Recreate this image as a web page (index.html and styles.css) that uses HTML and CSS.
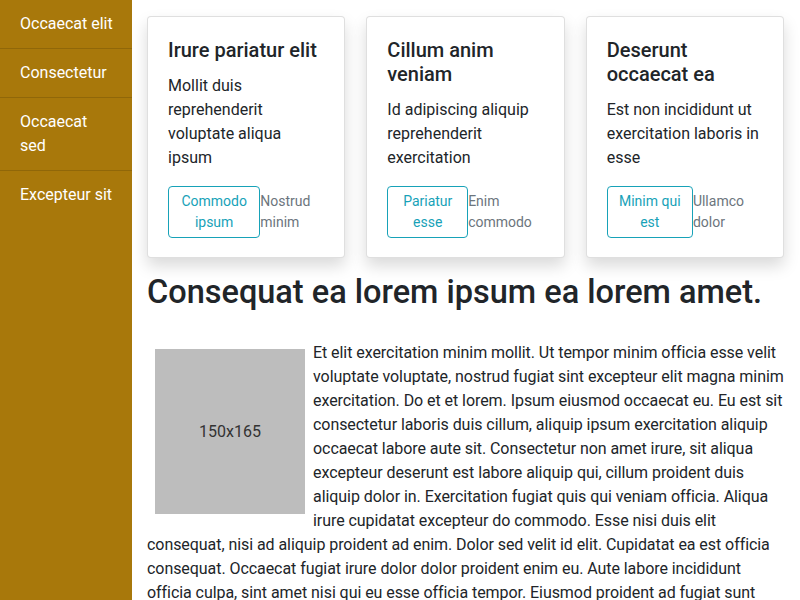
FILE: index.html
```html
<!DOCTYPE html>
<html lang="la">
<head>
<meta charset="utf-8">
<title>Consequat</title>
<link rel="stylesheet" href="styles.css">
</head>
<body>
<div class="layout">
  <nav class="sidebar">
    <a class="nav-item" href="#">Occaecat elit</a>
    <a class="nav-item" href="#">Consectetur</a>
    <a class="nav-item" href="#">Occaecat<br>sed</a>
    <a class="nav-item" href="#">Excepteur sit</a>
  </nav>
  <main class="main">
    <div class="cards">
      <div class="card">
        <h5 class="card-title">Irure pariatur elit</h5>
        <p class="card-text">Mollit duis reprehenderit voluptate aliqua ipsum</p>
        <div class="card-actions">
          <a class="btn" href="#">Commodo ipsum</a>
          <small class="muted">Nostrud minim</small>
        </div>
      </div>
      <div class="card">
        <h5 class="card-title">Cillum anim veniam</h5>
        <p class="card-text">Id adipiscing aliquip reprehenderit exercitation</p>
        <div class="card-actions">
          <a class="btn" href="#">Pariatur esse</a>
          <small class="muted">Enim commodo</small>
        </div>
      </div>
      <div class="card">
        <h5 class="card-title">Deserunt occaecat ea</h5>
        <p class="card-text">Est non incididunt ut exercitation laboris in esse</p>
        <div class="card-actions">
          <a class="btn" href="#">Minim qui est</a>
          <small class="muted">Ullamco dolor</small>
        </div>
      </div>
    </div>
    <h2 class="title">Consequat ea lorem ipsum ea lorem amet.</h2>
    <p class="article"><span class="placeholder">150x165</span>Et elit exercitation minim mollit. Ut tempor minim officia esse velit voluptate voluptate, nostrud fugiat sint excepteur elit magna minim exercitation. Do et et lorem. Ipsum eiusmod occaecat eu. Eu est sit consectetur laboris duis cillum, aliquip ipsum exercitation aliquip occaecat labore aute sit. Consectetur non amet irure, sit aliqua excepteur deserunt est labore aliquip qui, cillum proident duis aliquip dolor in. Exercitation fugiat quis qui veniam officia. Aliqua irure cupidatat excepteur do commodo. Esse nisi duis elit consequat, nisi ad aliquip proident ad enim. Dolor sed velit id elit. Cupidatat ea est officia consequat. Occaecat fugiat irure dolor dolor proident enim eu. Aute labore incididunt officia culpa, sint amet nisi qui eu esse officia tempor. Eiusmod proident ad fugiat sunt cillum nostrud, dolore magna eu velit laboris. Labore sint amet in ipsum est commodo.</p>
  </main>
</div>
</body>
</html>
```
FILE: styles.css
```css
html, body {
  margin: 0;
  height: 100%;
}
body {
  font-family: Roboto, "Liberation Sans", sans-serif;
  font-size: 16px;
  line-height: 24px;
  color: #212529;
  background: #fff;
  overflow: hidden;
}
.layout {
  display: flex;
  height: 100%;
}
.sidebar {
  width: 132px;
  flex: 0 0 132px;
  background: #a8780b;
  display: flex;
  flex-direction: column;
}
.nav-item {
  display: block;
  padding: 12px 8px 12px 20px;
  color: #fff;
  text-decoration: none;
  border-bottom: 1px solid rgba(0, 0, 0, 0.14);
}
.nav-item:last-child {
  border-bottom: none;
}
.main {
  flex: 1;
  padding: 16px 16px 0 15px;
  min-width: 0;
}
.cards {
  display: grid;
  grid-template-columns: repeat(3, 1fr);
  gap: 21px;
  margin-bottom: 15px;
}
.card {
  background: #fff;
  border: 1px solid rgba(0, 0, 0, 0.125);
  border-radius: 4px;
  box-shadow: 0 8px 16px rgba(0, 0, 0, 0.15);
  padding: 21px 20px 19px;
}
.card-title {
  margin: 0 0 12px;
  font-size: 20px;
  line-height: 24px;
  font-weight: 500;
}
.card-text {
  margin: 0 0 16px;
}
.card-actions {
  display: flex;
  align-items: center;
}
.btn {
  display: inline-block;
  text-align: center;
  color: #17a2b8;
  border: 1px solid #17a2b8;
  border-radius: 4px;
  padding: 4px 8px;
  font-size: 14px;
  line-height: 21px;
  text-decoration: none;
}
.muted {
  color: #6c757d;
  font-size: 14px;
  line-height: 21px;
}
.title {
  margin: 0 0 29px;
  font-size: 32.5px;
  line-height: 39px;
  font-weight: 500;
}
.article {
  margin: 0;
  letter-spacing: -0.06px;
}
.placeholder {
  float: left;
  width: 150px;
  height: 165px;
  margin: 8px;
  background: #bdbdbd;
  color: #333;
  letter-spacing: 0;
  display: flex;
  align-items: center;
  justify-content: center;
}
```
